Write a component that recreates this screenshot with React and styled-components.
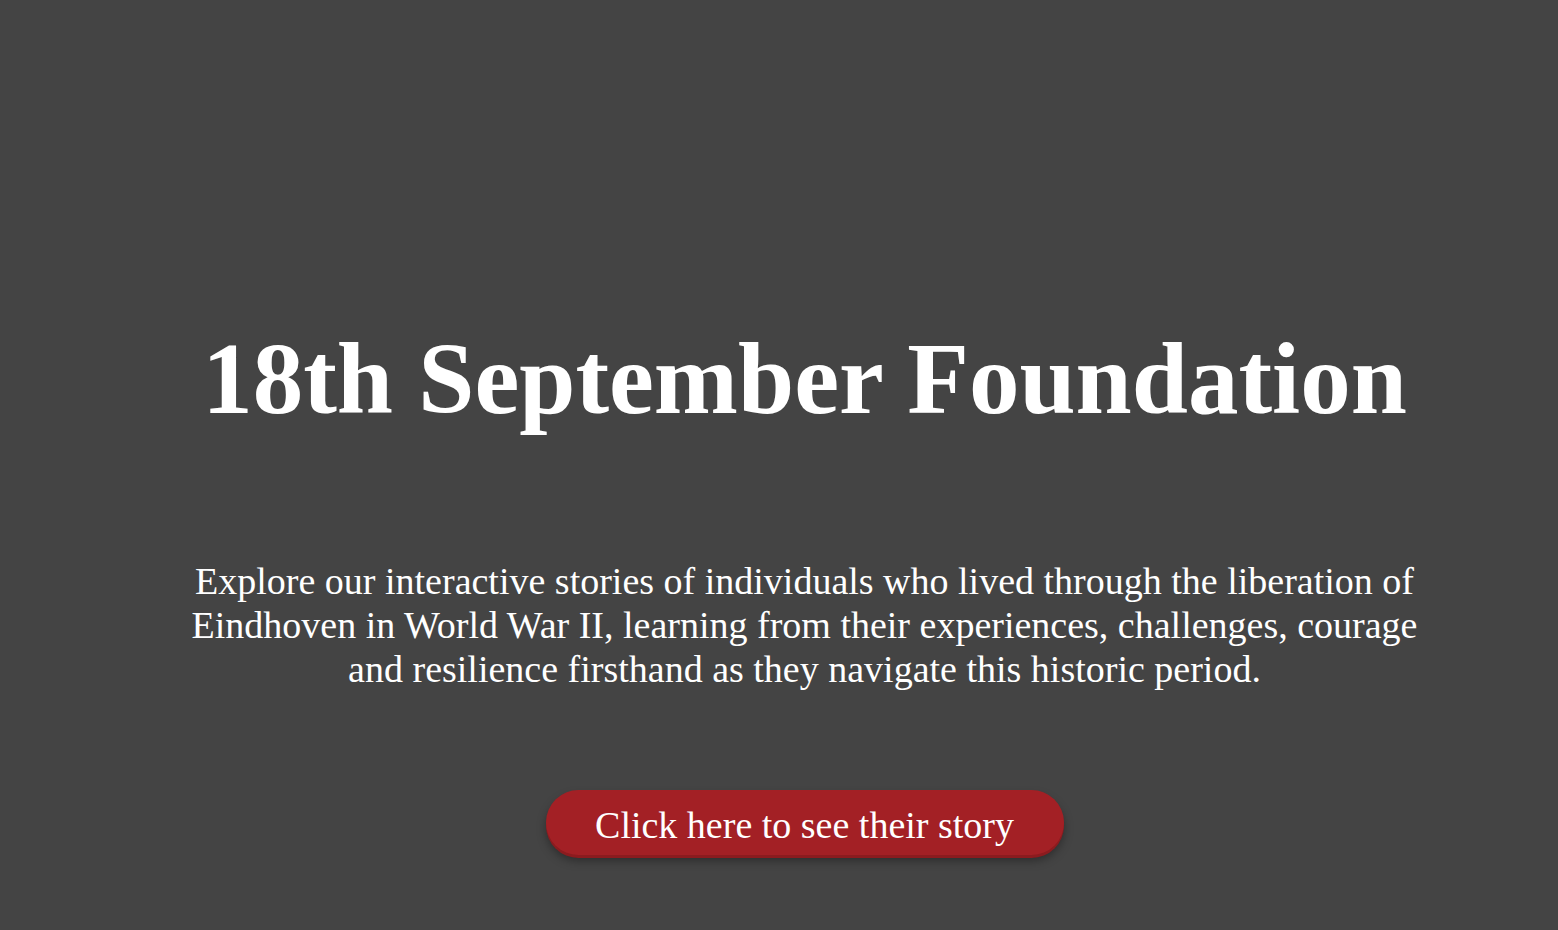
import React from 'react';
import styled, { createGlobalStyle } from 'styled-components';

const GlobalStyle = createGlobalStyle`
  html, body {
    margin: 0;
    padding: 0;
    background-color: #444444;
  }
`;

const Hero = styled.main`
  height: 930px;
  padding-left: 51px; /* content sits a bit right of centre */
  box-sizing: border-box;
  display: flex;
  flex-direction: column;
  align-items: center;
  font-family: "Liberation Serif", "Times New Roman", serif;
  color: #ffffff;
  text-align: center;
`;

const Title = styled.h1`
  margin: 322px 0 0;
  font-size: 101px;
  font-weight: bold;
  line-height: 115px;
`;

const Intro = styled.p`
  margin: 122px 0 0;
  width: 1250px;
  font-size: 38px;
  line-height: 44px;
`;

const StoryButton = styled.button`
  margin-top: 99px;
  width: 518px;
  height: 65px;
  padding: 5px 0 0;
  border: none;
  border-radius: 33px;
  background-color: #a32025;
  color: #ffffff;
  font-family: inherit;
  font-size: 38px;
  cursor: pointer;
  box-shadow: 0 3px 0 #8c1b1f, 0 6px 10px rgba(0, 0, 0, 0.35); /* raised look */
`;

const App = () => {
  return (
    <>
      <GlobalStyle />
      <Hero>
        <Title>18th September Foundation</Title>
        <Intro>
          Explore our interactive stories of individuals who lived through the liberation of
          Eindhoven in World War II, learning from their experiences, challenges, courage
          and resilience firsthand as they navigate this historic period.
        </Intro>
        <StoryButton>Click here to see their story</StoryButton>
      </Hero>
    </>
  );
};

export default App;
